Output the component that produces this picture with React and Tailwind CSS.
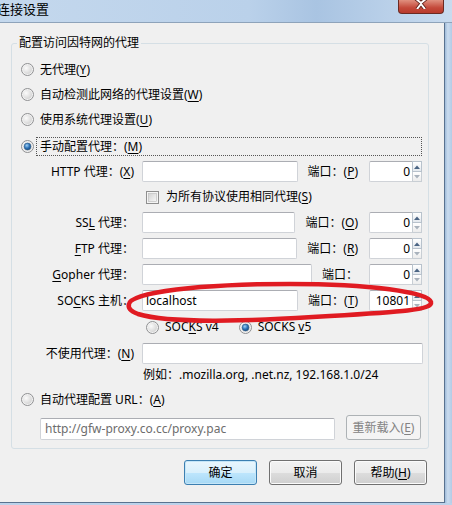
import React from 'react';

const U = ({ children }) => <u className="underline decoration-1 underline-offset-[2px]">{children}</u>;

const Radio = ({ checked }) => (
  <svg width="13" height="13" viewBox="0 0 13 13" className="shrink-0">
    <defs>
      <radialGradient id="radioIn" cx="0.35" cy="0.35" r="0.8">
        <stop offset="0" stopColor="#fbfbfb" />
        <stop offset="1" stopColor="#cfcfcf" />
      </radialGradient>
      <radialGradient id="radioDot" cx="0.4" cy="0.35" r="0.7">
        <stop offset="0" stopColor="#9fd0f5" />
        <stop offset="0.55" stopColor="#2f74b8" />
        <stop offset="1" stopColor="#17487a" />
      </radialGradient>
    </defs>
    <circle cx="6.5" cy="6.5" r="6" fill="#f2f2f2" stroke="#8f9092" />
    <circle cx="6.5" cy="6.5" r="4.5" fill="url(#radioIn)" />
    {checked && <circle cx="6.5" cy="6.5" r="3.4" fill="url(#radioDot)" stroke="#2b5b86" strokeWidth="0.6" />}
  </svg>
);

const Checkbox = () => (
  <svg width="13" height="13" viewBox="0 0 13 13" className="shrink-0">
    <defs>
      <linearGradient id="cbIn" x1="0" y1="0" x2="1" y2="1">
        <stop offset="0" stopColor="#d2d2d2" />
        <stop offset="1" stopColor="#f7f7f7" />
      </linearGradient>
    </defs>
    <rect x="0.5" y="0.5" width="12" height="12" fill="#f4f4f4" stroke="#8f8f8f" />
    <rect x="2.5" y="2.5" width="8" height="8" fill="url(#cbIn)" stroke="#b9b9b9" strokeWidth="0.6" />
  </svg>
);

const TextBox = ({ value, className = '', muted }) => (
  <div
    className={`flex h-[21px] items-center rounded-[2px] border border-[#d0d3d8] border-t-[#abadb3] bg-white pl-[3px] whitespace-nowrap overflow-hidden ${muted ? 'text-[#6d6d6d]' : 'text-black'} ${className}`}
  >
    {value}
  </div>
);

const Arrow = ({ up, color }) => (
  <svg width="6" height="4" viewBox="0 0 6 4">
    {up ? <path d="M0 4 L3 0.5 L6 4 Z" fill={color} /> : <path d="M0 0 L3 3.5 L6 0 Z" fill={color} />}
  </svg>
);

const PortBox = ({ value, className = '' }) => (
  <div className={`flex h-[21px] w-[53px] shrink-0 ${className}`}>
    <div className="flex w-[43px] items-center justify-end rounded-l-[2px] border border-r-0 border-[#d0d3d8] border-t-[#abadb3] bg-white pr-[2px]">
      {value}
    </div>
    <div className="flex w-[10px] flex-col">
      <div className="flex h-[11px] items-center justify-center border border-[#b8c2cc] bg-[linear-gradient(#ffffff,#e4e9ee)]">
        <Arrow up color="#4b6584" />
      </div>
      <div className="flex h-[10px] items-center justify-center border border-t-0 border-[#c8ced4] bg-[linear-gradient(#ffffff,#ececec)]">
        <Arrow color="#a9b2bc" />
      </div>
    </div>
  </div>
);

const ProxyRow = ({ label, value, portLabel, port }) => (
  <div className="mt-[5px] flex h-[21px] items-center pr-[6px]">
    <div className="w-[122px] shrink-0 text-right whitespace-nowrap">{label}</div>
    <TextBox className="ml-[8px] min-w-0 flex-1" value={value} />
    <div className="ml-[10px] whitespace-nowrap">{portLabel}</div>
    <PortBox className="ml-[11px]" value={port} />
  </div>
);

const Btn = ({ children, primary, disabled, className = '' }) => (
  <div
    className={`flex h-[25px] items-center justify-center rounded-[3px] border ${
      primary
        ? 'border-[#3c7fb1] shadow-[inset_0_0_0_1px_#c5e6f8] bg-[linear-gradient(#eaf6fd_0%,#d9f0fc_50%,#bee6fd_51%,#a7d9f5_100%)]'
        : disabled
        ? 'border-[#adb2b5] bg-[#f4f4f4] text-[#838383]'
        : 'border-[#707070] shadow-[inset_0_0_0_1px_#fbfbfb] bg-[linear-gradient(#f2f2f2_0%,#ebebeb_50%,#dddddd_51%,#cfcfcf_100%)]'
    } ${className}`}
  >
    {children}
  </div>
);

const RadioRow = ({ checked, children, className = '' }) => (
  <div className={`flex h-[25px] items-center pl-[9px] ${className}`}>
    <Radio checked={checked} />
    <span className="ml-[6px] whitespace-nowrap">{children}</span>
  </div>
);

export default function App() {
  return (
    <div className="relative h-[505px] w-[452px] overflow-hidden bg-[#bcd2ea] font-['Noto_Sans','Noto_Sans_CJK_SC',sans-serif] text-[12px] leading-[16px] text-black">
      {/* title bar */}
      <div className="flex h-[23px] items-start border-b border-[#8ea3ba] bg-[linear-gradient(90deg,#c4d8ed_0%,#bad1ea_55%,#a9c4e2_70%,#c8dbef_100%)]">
        <div className="ml-[-3px] pt-[1px] text-[13px] leading-[16px]">连接设置</div>
        <div className="ml-auto mr-[8px] flex h-[14px] w-[46px] items-end justify-center overflow-hidden rounded-b-[4px] border border-t-0 border-[#6b2a22] bg-[linear-gradient(#e0907f,#c4493a_60%,#b83a2c)]">
          <svg width="14" height="9" viewBox="0 0 14 9" className="mb-[4px]">
            <path d="M1 -2 L7 3 L13 -2 M3 9 L7 4 L11 9" fill="none" stroke="#5a1d16" strokeWidth="3.6" />
            <path d="M1 -2 L7 3 L13 -2 M3 9 L7 4 L11 9" fill="none" stroke="#ffffff" strokeWidth="2" />
          </svg>
        </div>
      </div>

      <div className="flex">
        {/* client area */}
        <div className="h-[480px] w-[445px] border-b border-r border-[#59728f] bg-[#f0f0f0] pt-[20px]">
          <div className="relative ml-[11px] w-[418px] rounded-[3px] border border-[#d5dfe5] pb-[8px] pt-[13px]">
            <div className="absolute left-[5px] top-[-9px] bg-[#f0f0f0] px-[2px] whitespace-nowrap">配置访问因特网的代理</div>

            <RadioRow>无代理(<U>Y</U>)</RadioRow>
            <RadioRow>自动检测此网络的代理设置(<U>W</U>)</RadioRow>
            <RadioRow>使用系统代理设置(<U>U</U>)</RadioRow>
            <div className="mt-[2px] flex h-[25px] items-center pl-[9px] pr-[6px]">
              <Radio checked />
              <div className="ml-[2px] flex h-[19px] flex-1 items-center border border-dotted border-[#555] pl-[3px] whitespace-nowrap">
                手动配置代理：(<U>M</U>)
              </div>
            </div>

            <div className="mt-[2px] flex h-[21px] items-center pr-[6px]">
              <div className="w-[122px] shrink-0 text-right whitespace-nowrap">HTTP 代理：(<U>X</U>)</div>
              <TextBox className="ml-[8px] min-w-0 flex-1" value="" />
              <div className="ml-[10px] whitespace-nowrap">端口：(<U>P</U>)</div>
              <PortBox className="ml-[11px]" value="0" />
            </div>

            <div className="mt-[5px] flex h-[20px] items-center pl-[134px]">
              <Checkbox />
              <span className="ml-[7px] whitespace-nowrap">为所有协议使用相同代理(<U>S</U>)</span>
            </div>

            <ProxyRow label={<>SS<U>L</U> 代理：</>} value="" portLabel={<>端口：(<U>O</U>)</>} port="0" />
            <ProxyRow label={<><U>F</U>TP 代理：</>} value="" portLabel={<>端口：(<U>R</U>)</>} port="0" />
            <ProxyRow label={<><U>G</U>opher 代理：</>} value="" portLabel="端口：" port="0" />
            <ProxyRow label={<>SO<U>C</U>KS 主机：</>} value="localhost" portLabel={<>端口：(<U>T</U>)</>} port="10801" />

            <div className="mt-[6px] flex h-[20px] items-center pl-[134px]">
              <Radio />
              <span className="ml-[6px] whitespace-nowrap">SOC<U>K</U>S v4</span>
              <span className="ml-[20px]"><Radio checked /></span>
              <span className="ml-[6px] whitespace-nowrap">SOCKS <U>v</U>5</span>
            </div>

            <div className="mt-[6px] flex h-[21px] items-center pr-[5px]">
              <div className="w-[122px] shrink-0 text-right whitespace-nowrap">不使用代理：(<U>N</U>)</div>
              <TextBox className="ml-[8px] flex-1" value="" />
            </div>

            <div className="mt-[2px] flex h-[18px] items-center pl-[131px] whitespace-nowrap">
              例如：.mozilla.org, .net.nz, 192.168.1.0/24
            </div>

            <RadioRow className="mt-[3px] h-[24px]">自动代理配置 URL：(<U>A</U>)</RadioRow>

            <div className="mt-[3px] flex h-[25px] items-end pl-[28px]">
              <TextBox className="h-[22px] w-[295px] bg-[#fdfdfd] pl-[4px]" muted value="http://gfw-proxy.co.cc/proxy.pac" />
              <Btn disabled className="ml-[11px] w-[75px]">重新载入(<U>E</U>)</Btn>
            </div>
          </div>

          <div className="mt-[11px] flex justify-end gap-[12px] pr-[17px]">
            <Btn primary className="w-[73px]">确定</Btn>
            <Btn className="w-[73px]">取消</Btn>
            <Btn className="w-[73px]">帮助(<U>H</U>)</Btn>
          </div>
        </div>
        <div className="h-[480px] flex-1 bg-[linear-gradient(90deg,#9fbbd9,#c9dbee_40%,#b3cbe6)]" />
      </div>

      {/* hand-drawn highlight over the SOCKS row */}
      <svg className="pointer-events-none absolute left-0 top-0" width="452" height="505" viewBox="0 0 452 505">
        <path
          d="M129 304 C131 292 200 284 290 284 C370 284 428 292 431 302 C433 310 400 312 330 316 C250 321 170 324 138 314 C130 311 128 307 129 304 Z"
          fill="none"
          stroke="#e01b22"
          strokeWidth="4.5"
          strokeLinejoin="round"
        />
      </svg>
    </div>
  );
}
